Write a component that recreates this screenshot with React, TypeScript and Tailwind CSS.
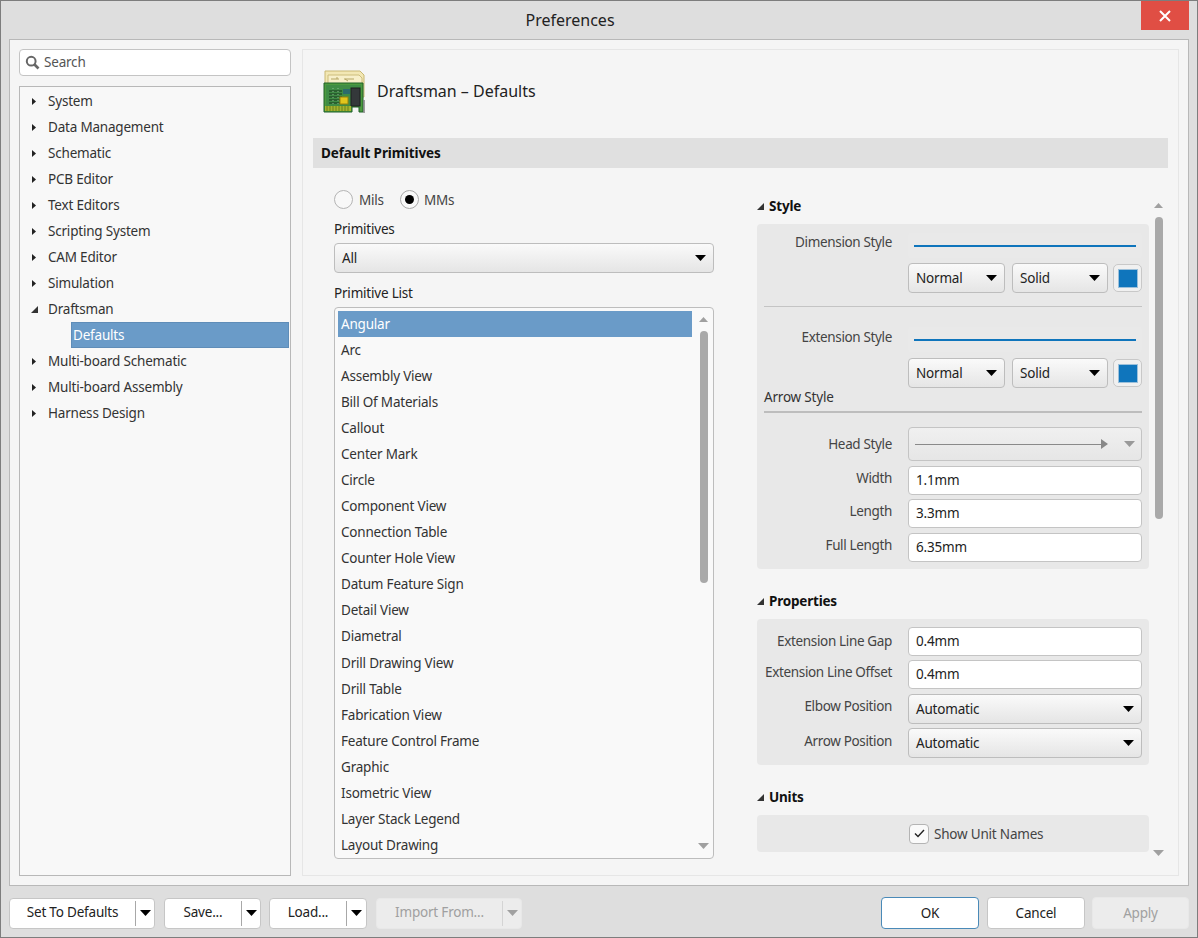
import { ReactNode } from 'react'

const TREE = ['System', 'Data Management', 'Schematic', 'PCB Editor', 'Text Editors', 'Scripting System', 'CAM Editor', 'Simulation']
const TREE_AFTER = ['Multi-board Schematic', 'Multi-board Assembly', 'Harness Design']
const PRIMITIVES = ['Angular', 'Arc', 'Assembly View', 'Bill Of Materials', 'Callout', 'Center Mark', 'Circle', 'Component View', 'Connection Table', 'Counter Hole View', 'Datum Feature Sign', 'Detail View', 'Diametral', 'Drill Drawing View', 'Drill Table', 'Fabrication View', 'Feature Control Frame', 'Graphic', 'Isometric View', 'Layer Stack Legend', 'Layout Drawing']

const Down = ({ className = 'fill-black' }: { className?: string }) => (
  <svg width="11" height="6" viewBox="0 0 11 6" className={className}><path d="M0 0h11L5.5 6z" /></svg>
)
const Up = () => (
  <svg width="9" height="5" viewBox="0 0 9 5" className="fill-[#a0a0a0]"><path d="M0 5h9L4.5 0z" /></svg>
)
const Right = () => (
  <svg width="4" height="7" viewBox="0 0 4 7" className="fill-[#222]"><path d="M0 0l4 3.5L0 7z" /></svg>
)
const Corner = () => (
  <svg width="7" height="7" viewBox="0 0 7 7" className="fill-[#333]"><path d="M7 0v7H0z" /></svg>
)

function TreeRow({ label }: { label: string }) {
  return (
    <div className="h-[26px] flex items-center pl-[12px]">
      <Right />
      <span className="ml-[12px]">{label}</span>
    </div>
  )
}

function Select({ label, w = 'w-full', h = 'h-[30px]' }: { label: string; w?: string; h?: string }) {
  return (
    <div className={`${w} ${h} flex items-center justify-between pl-[7px] pr-[7px] rounded-[4px] border border-[#bdbdbd] bg-linear-to-b from-[#fafafa] to-[#e5e5e5] text-[#222]`}>
      <span>{label}</span>
      <Down />
    </div>
  )
}

function Input({ value, h = 'h-[29px]' }: { value: string; h?: string }) {
  return (
    <div className={`${h} w-full flex items-center pl-[7px] rounded-[4px] border border-[#c4c4c4] bg-white text-[#222]`}>{value}</div>
  )
}

function Row({ label, children, className = '', lift = '' }: { label: string; children: ReactNode; className?: string; lift?: string }) {
  return (
    <div className={`flex items-center ${className}`}>
      <span className={`w-[128px] leading-[16px] text-right whitespace-nowrap tracking-[-0.35px] text-[#444] ${lift}`}>{label}</span>
      <div className="w-[234px] ml-[16px]">{children}</div>
    </div>
  )
}

function Heading({ label, className = '' }: { label: string; className?: string }) {
  return (
    <div className={`h-[18px] flex items-center font-bold text-[#111] ${className}`}>
      <Corner />
      <span className="ml-[5px]">{label}</span>
    </div>
  )
}

function StylePick() {
  return (
    <div className="flex">
      <Select label="Normal" w="w-[97px]" />
      <div className="ml-[7px]"><Select label="Solid" w="w-[96px]" /></div>
      <div className="ml-[5px] w-[29px] h-[28px] mt-[1px] rounded-[5px] border border-[#c8c8c8] bg-[#f0f0f0] flex items-center justify-center">
        <div className="w-[20px] h-[19px] bg-[#0f75bc] border border-[#9cc0da]" />
      </div>
    </div>
  )
}

function LinePreview() {
  return (
    <div className="h-[25px] flex items-center px-[6px] rounded-[4px] bg-[#e9e9e9]">
      <div className="h-[2px] w-full bg-[#0f75bc]" />
    </div>
  )
}

function SplitButton({ label, w, textW, disabled }: { label: string; w: string; textW: string; disabled?: boolean }) {
  return (
    <div className={`${w} h-[31px] flex items-center rounded-[4px] border ${disabled ? 'border-[#e8e8e8] bg-[#ececec] text-[#a0a0a0]' : 'border-[#c6c6c6] bg-white text-[#222]'}`}>
      <span className={`${textW} text-center pb-[1px]`}>{label}</span>
      <div className={`w-px h-[25px] ${disabled ? 'bg-[#d4d4d4]' : 'bg-[#a8a8a8]'}`} />
      <div className="flex-1 flex justify-center">
        <Down className={disabled ? 'fill-[#a0a0a0]' : 'fill-black'} />
      </div>
    </div>
  )
}

function Scrollbar({ thumbTop, thumbH, h, x }: { thumbTop: string; thumbH: string; h: string; x: string }) {
  return (
    <div className={`${x} ${h} flex flex-col items-center`}>
      <div className="h-[5px] flex items-center"><Up /></div>
      <div className={`${thumbTop} ${thumbH} w-[8px] rounded-[4px] bg-[#a9a9a9]`} />
      <div className="mt-auto"><Down className="fill-[#a0a0a0]" /></div>
    </div>
  )
}

function PcbIcon() {
  return (
    <svg width="44" height="44" viewBox="0 0 44 44">
      <path d="M2 1h35l4 4v22H2z" fill="#f2e7b4" stroke="#c9b873" />
      <path d="M5 5h31l3 3v14H5z" fill="#f7efc9" stroke="#cdbd7c" />
      <path d="M8 9h8m5 0h10M14 9V7M22 9l3 2" stroke="#b5a665" fill="none" />
      <path d="M1 13h39v29h-4v-5h-7v5H1z" fill="#4c9a3f" stroke="#1f6128" />
      <rect x="3" y="15" width="35" height="21" fill="#3f8c45" />
      <path d="M6 21h13M6 24h13M6 27h13M6 30h13M6 33h13" stroke="#16361d" strokeWidth="1.2" />
      <path d="M10 18v16M15 18v16" stroke="#8cbf90" strokeDasharray="1 2" />
      <rect x="20" y="19" width="7" height="5" fill="#2b6b6c" />
      <rect x="17" y="27" width="8" height="7" fill="#e1c51d" stroke="#97820d" />
      <rect x="28" y="18" width="9" height="18" fill="#34383a" stroke="#1c1e1f" />
      <path d="M2 36h26v5H2z" fill="#a3b52f" />
      <path d="M4 36v5M7 36v5M10 36v5M13 36v5M16 36v5M19 36v5M22 36v5M25 36v5" stroke="#6f7f1c" />
      <path d="M41 30v13" stroke="#7f7f7f" strokeWidth="1.5" />
    </svg>
  )
}

export default function App() {
  return (
    <div className="w-[1198px] h-[938px] border border-[#7d7d7d] bg-[#dedede] text-[13.5px] font-['Noto_Sans',sans-serif] tracking-[-0.2px] text-[#333] flex flex-col overflow-hidden">
      {/* title bar */}
      <div className="h-[38px] flex shrink-0">
        <div className="flex-1 h-[38px] flex items-center justify-center text-[16px] tracking-normal text-[#222] pr-[2px]">Preferences</div>
        <div className="w-[48px] h-[29px] bg-[#e04e44] flex items-center justify-center">
          <svg width="12" height="12" viewBox="0 0 12 12"><path d="M1 1l10 10M11 1L1 11" stroke="#fff" strokeWidth="2" /></svg>
        </div>
        <div className="w-[8px]" />
      </div>

      <div className="mx-[8px] h-[847px] shrink-0 border border-[#b8b8b8] bg-[#f5f5f5] p-[9px] flex">
        {/* left column */}
        <div className="w-[272px] shrink-0 flex flex-col">
          <div className="h-[27px] flex items-center pl-[5px] rounded-[4px] border border-[#c4c4c4] bg-white text-[#555]">
            <svg width="15" height="15" viewBox="0 0 15 15" fill="none" stroke="#666">
              <circle cx="6.2" cy="6.2" r="4.4" strokeWidth="2" />
              <path d="M9.5 9.5l4 4" strokeWidth="2.6" />
            </svg>
            <span className="ml-[4px] pb-[1px]">Search</span>
          </div>
          <div className="mt-[10px] h-[790px] border border-[#b8b8b8] bg-[#f8f8f8] pt-[1px]">
            {TREE.map((t) => <TreeRow key={t} label={t} />)}
            <div className="h-[26px] flex items-center pl-[11px]">
              <Corner />
              <span className="ml-[10px]">Draftsman</span>
            </div>
            <div className="ml-[51px] mr-[1px] h-[26px] flex items-center pl-[1px] bg-[#6a9bc8] border border-[#5f8db8] text-white">Defaults</div>
            {TREE_AFTER.map((t) => <TreeRow key={t} label={t} />)}
          </div>
        </div>

        {/* right panel */}
        <div className="ml-[11px] w-[877px] h-[827px] border border-[#e6e6e6] bg-[#f5f5f5] flex flex-col">
          <div className="h-[88px] shrink-0 flex items-start pl-[20px] pt-[20px]">
            <PcbIcon />
            <span className="ml-[10px] mt-[9px] text-[16px] tracking-normal text-[#222]">Draftsman – Defaults</span>
          </div>
          <div className="ml-[10px] w-[855px] h-[30px] shrink-0 bg-[#e0e0e0] flex items-center pl-[8px] pt-[1px] font-bold text-[13.5px] text-[#111] tracking-[-0.1px]">Default Primitives</div>

          <div className="flex">
            {/* primitives column */}
            <div className="ml-[31px] w-[380px] shrink-0">
              <div className="mt-[21px] h-[20px] flex items-center">
                <div className="w-[19px] h-[19px] rounded-full border border-[#b4b4b4] bg-[#f8f8f8]" />
                <span className="ml-[6px] pt-[2px] text-[#444]">Mils</span>
                <div className="ml-[16px] w-[19px] h-[19px] rounded-full border border-[#a8a8a8] bg-[#f8f8f8] flex items-center justify-center">
                  <div className="w-[9px] h-[9px] rounded-full bg-black" />
                </div>
                <span className="ml-[5px] pt-[2px] text-[#444]">MMs</span>
              </div>
              <div className="mt-[10px] h-[20px] flex items-center text-[#222]">Primitives</div>
              <div className="mt-[4px]"><Select label="All" /></div>
              <div className="mt-[10px] h-[20px] flex items-center text-[#222]">Primitive List</div>
              <div className="mt-[4px] h-[552px] rounded-[4px] border border-[#bdbdbd] bg-[#f9f9f9] flex overflow-hidden">
                <div className="w-[354px] ml-[3px] pt-[3px] shrink-0">
                  {PRIMITIVES.map((p, i) => (
                    <div key={p} className={`h-[26.05px] flex items-center pl-[3px] ${i === 0 ? 'bg-[#6a9bc8] text-white' : 'text-[#333]'}`}>{p}</div>
                  ))}
                </div>
                <Scrollbar x="ml-[6px] w-[11px] pt-[9px] pb-[9px]" h="h-full" thumbTop="mt-[9px]" thumbH="h-[252px]" />
              </div>
            </div>

            {/* settings column */}
            <div className="ml-[43px] w-[392px] shrink-0">
              <Heading label="Style" className="mt-[29px]" />
              <div className="mt-[9px] h-[345px] rounded-[4px] bg-[#e8e8e8] pl-[7px] pt-[9px]">
                <Row label="Dimension Style" lift="pb-[7px]"><LinePreview /></Row>
                <div className="ml-[144px] mt-[5px]"><StylePick /></div>
                <div className="mt-[13px] w-[378px] h-px bg-[#c4c4c4]" />
                <Row label="Extension Style" className="mt-[20px]" lift="pb-[5px]"><LinePreview /></Row>
                <div className="ml-[144px] mt-[6px]"><StylePick /></div>
                <div className="h-[19px] flex items-center text-[#333]">Arrow Style</div>
                <div className="mt-[4px] w-[378px] h-[2px] bg-[#bdbdbd]" />
                <Row label="Head Style" className="mt-[14px]">
                  <div className="h-[34px] px-[6px] flex items-center rounded-[4px] border border-[#c4c4c4] bg-linear-to-b from-[#f0f0f0] to-[#e6e6e6]">
                    <div className="w-[186px] h-px bg-[#8a8a8a]" />
                    <svg width="7" height="10" viewBox="0 0 7 10" className="fill-[#888]"><path d="M0 0l7 5-7 5z" /></svg>
                    <div className="ml-auto"><Down className="fill-[#999]" /></div>
                  </div>
                </Row>
                <Row label="Width" className="mt-[5px]" lift="pb-[5px]"><Input value="1.1mm" /></Row>
                <Row label="Length" className="mt-[4px]" lift="pb-[6px]"><Input value="3.3mm" /></Row>
                <Row label="Full Length" className="mt-[5px]" lift="pb-[6px]"><Input value="6.35mm" /></Row>
              </div>

              <Heading label="Properties" className="mt-[23px]" />
              <div className="mt-[9px] h-[146px] rounded-[4px] bg-[#e8e8e8] pl-[7px] pt-[8px]">
                <Row label="Extension Line Gap" lift="pb-[2px]"><Input value="0.4mm" /></Row>
                <Row label="Extension Line Offset" className="mt-[4px]" lift="pb-[6px]"><Input value="0.4mm" /></Row>
                <Row label="Elbow Position" className="mt-[5px]" lift="pb-[7px]"><Select label="Automatic" /></Row>
                <Row label="Arrow Position" className="mt-[4px]" lift="pb-[4px]"><Select label="Automatic" /></Row>
              </div>

              <Heading label="Units" className="mt-[23px]" />
              <div className="mt-[9px] h-[37px] rounded-[4px] bg-[#e8e8e8] flex items-center pl-[152px]">
                <div className="w-[20px] h-[20px] rounded-[4px] border border-[#b4b4b4] bg-[#fafafa] flex items-center justify-center">
                  <svg width="11" height="9" viewBox="0 0 11 9" fill="none" stroke="#222" strokeWidth="1.4"><path d="M1 4.5l3 3L10 1" /></svg>
                </div>
                <span className="ml-[5px] pt-[2px] text-[#444]">Show Unit Names</span>
              </div>
            </div>

            <Scrollbar x="ml-[4px] w-[11px] pt-[35px] pb-[20px]" h="h-[708px]" thumbTop="mt-[9px]" thumbH="h-[302px]" />
          </div>
        </div>
      </div>

      {/* footer */}
      <div className="flex items-center pl-[8px] pr-[8px] mt-[11px]">
        <SplitButton label="Set To Defaults" w="w-[146px]" textW="w-[125px]" />
        <div className="ml-[9px]"><SplitButton label="Save..." w="w-[97px]" textW="w-[76px]" /></div>
        <div className="ml-[8px]"><SplitButton label="Load..." w="w-[98px]" textW="w-[76px]" /></div>
        <div className="ml-[9px]"><SplitButton label="Import From..." w="w-[146px]" textW="w-[125px]" disabled /></div>
        <div className="ml-auto w-[98px] h-[32px] flex items-center justify-center rounded-[4px] border border-[#4a8ab8] bg-white text-[#222]">OK</div>
        <div className="ml-[8px] w-[98px] h-[32px] flex items-center justify-center rounded-[4px] border border-[#c6c6c6] bg-white text-[#222]">Cancel</div>
        <div className="ml-[7px] w-[97px] h-[32px] flex items-center justify-center rounded-[4px] border border-[#e8e8e8] bg-[#ececec] text-[#a0a0a0]">Apply</div>
      </div>
    </div>
  )
}
